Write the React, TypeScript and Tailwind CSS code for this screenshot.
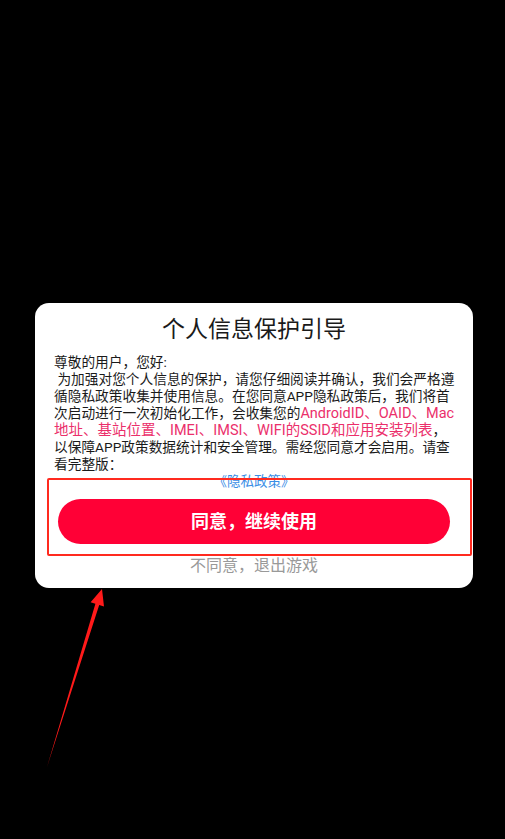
const lines: { text: string; pink?: string; tail?: string }[] = [
  { text: '尊敬的用户，您好:' },
  { text: ' 为加强对您个人信息的保护，请您仔细阅读并确认，我们会严格遵' },
  { text: '循隐私政策收集并使用信息。在您同意APP隐私政策后，我们将首' },
  { text: '次启动进行一次初始化工作，会收集您的', pink: 'AndroidID、OAID、Mac' },
  { text: '', pink: '地址、基站位置、IMEI、IMSI、WIFI的SSID和应用安装列表', tail: '，' },
  { text: '以保障APP政策数据统计和安全管理。需经您同意才会启用。请查' },
  { text: '看完整版：' },
];

export default function App() {
  return (
    <div
      className="relative w-[505px] h-[839px] overflow-hidden bg-black"
      style={{ fontFamily: 'Roboto, "Noto Sans CJK SC", sans-serif' }}
    >
      <div className="pt-[303px] pl-[35px]">
        {/* Dialog card */}
        <div className="w-[438px] rounded-[14px] bg-white">
          <h1 className="pt-[13px] text-center text-[23px] leading-[28px] text-[#1a1a1a]">
            个人信息保护引导
          </h1>

          <div className="mt-[10px] pl-[19px] text-[13.7px] leading-[17px] text-[#1a1a1a]">
            {lines.map((line, i) => (
              <p key={i} className="whitespace-pre">
                {line.text}
                {line.pink && <span className="text-[14.5px] text-[#eb2f6b]">{line.pink}</span>}
                {line.tail}
              </p>
            ))}
          </div>

          <p className="text-center text-[13.5px] leading-[17px] text-[#3a8ee6]">《隐私政策》</p>

          <div className="mt-[9px] px-[23px]">
            <button className="flex h-[45px] w-full items-center justify-center rounded-full bg-[#ff0036] text-[18px] font-bold text-white">
              同意，继续使用
            </button>
          </div>

          <p className="mt-[11px] pb-[11px] text-center text-[16px] leading-[22px] text-[#999999]">
            不同意，退出游戏
          </p>
        </div>
      </div>

      {/* Annotation: red highlight box */}
      <div className="absolute left-[47px] top-[478px] h-[78px] w-[425px] rounded-[2px] border-2 border-[#ff2a1f]" />

      {/* Annotation: arrow */}
      <svg className="absolute left-0 top-0" width="505" height="839" viewBox="0 0 505 839">
        <polygon
          points="47,767 95.4,603.7 90.6,602.2 102,589 104,606.4 99.2,604.9"
          fill="#ff1a1a"
        />
      </svg>
    </div>
  );
}
